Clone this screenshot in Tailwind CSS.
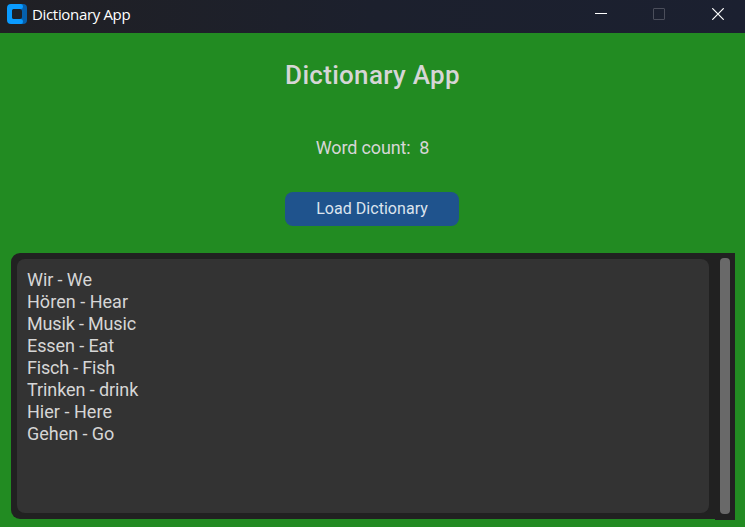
<!DOCTYPE html>
<html lang="en">
<head>
<meta charset="utf-8">
<title>Dictionary App</title>
<script src="https://cdn.jsdelivr.net/npm/@tailwindcss/browser@4"></script>
</head>
<body class="w-[745px] h-[527px] overflow-hidden bg-[#228b22] flex flex-col font-['Roboto',sans-serif] text-[#dce4ee]">
  <header class="h-[33px] shrink-0 flex items-start justify-between bg-linear-to-r from-[#202024] via-[#1c202d] to-[#1b2030]">
    <div class="flex items-start pl-[7px] pt-1">
      <svg class="w-5 h-5" viewBox="0 0 20 20">
        <path d="M13 0h3a4 4 0 0 1 4 4v12a4 4 0 0 1-4 4h-3z" fill="#0560ad"/>
        <path d="M4 0h10q2 0 2 2.500t-2 2.500H7a2 2 0 0 0-2 2v6a2 2 0 0 0 2 2h7q2 0 2 2.500t-2 2.500H4a4 4 0 0 1-4-4V4a4 4 0 0 1 4-4z" fill="#0a9bff"/>
        <rect x="5" y="5" width="10" height="10" rx="2.500" fill="#1d2027"/>
      </svg>
      <span class="ml-[5px] text-[15px] leading-5 font-['Open_Sans',sans-serif] tracking-[-0.33px] text-white whitespace-nowrap">Dictionary App</span>
    </div>
    <div class="flex items-start gap-[46px] pr-[21px] pt-2">
      <svg class="w-3 h-3" viewBox="0 0 12 12"><path d="M0 5.500h12" stroke="#fff"/></svg>
      <svg class="w-3 h-3" viewBox="0 0 12 12"><rect x=".5" y=".5" width="11" height="11" rx=".5" fill="none" stroke="#4b4e5b"/></svg>
      <svg class="w-3 h-3 ml-px" viewBox="0 0 12 12"><path d="M.3.3l11.400 11.400M11.700.3L.3 11.700" stroke="#fff" stroke-width="1.200"/></svg>
    </div>
  </header>
  <main class="flex-1 flex flex-col items-center">
    <h1 class="mt-[26px] h-8 leading-8 text-[26px] font-medium tracking-[0.3px] text-[#d6d6d6] whitespace-nowrap">Dictionary App</h1>
    <p class="mt-[45px] h-6 leading-6 text-[18px] tracking-[-0.13px] text-[#d6d6d6] whitespace-pre">Word count:  8</p>
    <button class="mt-8 mr-px w-[174px] h-[34px] rounded-lg bg-[#1f538d] text-base leading-[34px] tracking-[0.04px]">Load Dictionary</button>
    <section class="mt-[27px] ml-px w-[724px] h-[267px] flex">
      <div class="w-[704px] h-[266px] rounded-l-[9px] bg-[#212121] p-[6px]">
        <div class="w-[692px] h-[254px] rounded-lg bg-[#333333] pl-[10px] pt-[10px] text-[18px] leading-[22px] tracking-[-0.09px] text-[#d6d6d6]">
          <p>Wir - We</p>
          <p class="tracking-[0.03px]">Hören - Hear</p>
          <p class="tracking-[-0.16px]">Musik - Music</p>
          <p>Essen - Eat</p>
          <p class="tracking-[-0.2px]">Fisch - Fish</p>
          <p>Trinken - drink</p>
          <p class="tracking-[0.03px]">Hier - Here</p>
          <p class="tracking-[-0.03px]">Gehen - Go</p>
        </div>
      </div>
      <div class="w-5 h-[267px] bg-[#212121] px-[5px] pt-[5px]">
        <div class="w-[10px] h-[256px] rounded-[4px] bg-[#696969]"></div>
      </div>
    </section>
  </main>
</body>
</html>
